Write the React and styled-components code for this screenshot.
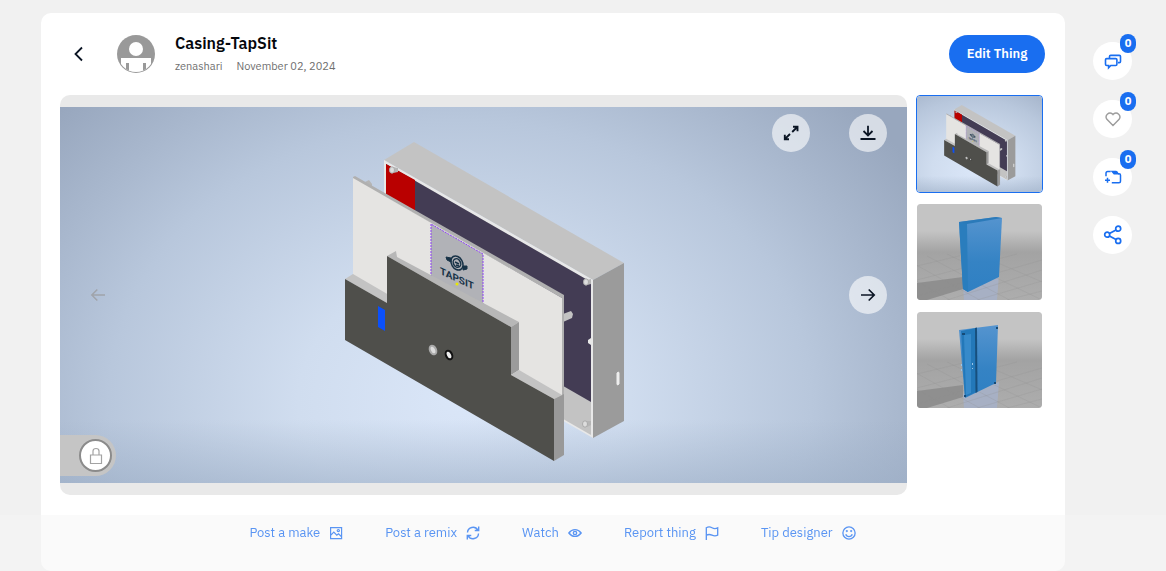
import React from "react";
import styled, { createGlobalStyle, css } from "styled-components";

const BLUE = "#196ef0";
const INK = "#0b1524";

const GlobalStyle = createGlobalStyle`
  * { box-sizing: border-box; }
  body {
    margin: 0;
    background: #f1f1f1;
    color: ${INK};
    font-family: "IBM Plex Sans", Roboto, "Liberation Sans", sans-serif;
  }
  button { font: inherit; color: inherit; border: 0; padding: 0; background: none; cursor: pointer; }
  a { color: inherit; text-decoration: none; }
  svg { display: block; }
`;

const Page = styled.div`
  display: flex;
  align-items: flex-start;
  padding: 13px 0 0 41px;
`;

const Card = styled.main`
  flex: 1;
  min-width: 0;
  padding: 22px 20px 76px 19px;
  background: #fff;
  border-radius: 10px;
`;

const Header = styled.header`
  display: flex;
  align-items: center;
  height: 38px;
  margin-bottom: 22px;
`;

const BackLink = styled.a`
  display: flex;
  width: 57px;
  padding-left: 11px;
`;

const Heading = styled.div`
  flex: 1;
  padding: 0 0 2px 20px;
`;

const Title = styled.h1`
  margin: 0;
  font-size: 16px;
  line-height: 20px;
  font-weight: 600;
  color: #05070c;
`;

const Meta = styled.div`
  display: flex;
  gap: 14px;
  padding-top: 6px;
  font-size: 11px;
  line-height: 14px;
  color: #6f6f6f;
`;

const EditButton = styled.button`
  height: 38px;
  width: 96px;
  border-radius: 19px;
  background: ${BLUE};
  color: #fff;
  font-size: 13px;
  font-weight: 600;
  padding-bottom: 2px;
`;

const Gallery = styled.section`
  display: flex;
  align-items: flex-start;
  gap: 9px;
`;

const Viewer = styled.div`
  position: relative;
  flex: 1;
  min-width: 0;
  padding: 12px 0;
  overflow: hidden;
  background: #e9e9e9;
  border-radius: 10px;
`;

const Render = styled.svg`
  width: 100%;
  height: auto;
  aspect-ratio: 847 / 376;
`;

const RoundButton = styled.button`
  display: grid;
  place-items: center;
  width: 38px;
  height: 38px;
  border-radius: 50%;
  background: ${(p) => (p.$bare ? "transparent" : "rgba(255, 255, 255, 0.6)")};
  color: ${(p) => (p.$bare ? "#a0a4ab" : INK)};
`;

const TopControls = styled.div`
  position: absolute;
  top: 19px;
  right: 20px;
  display: flex;
  gap: 39px;
`;

const SlideControl = styled.div`
  position: absolute;
  top: calc(50% - 19px);
  ${(p) => (p.$side === "left" ? css`left: 19px;` : css`right: 20px;`)}
`;

const LockTab = styled.div`
  position: absolute;
  left: 0;
  bottom: 19px;
  padding: 4px 4px 4px 19px;
  border-radius: 0 21px 21px 0;
  background: #c5c5c5;
`;

const LockButton = styled.button`
  display: grid;
  place-items: center;
  width: 33px;
  height: 33px;
  border: 2px solid #8b8b8b;
  border-radius: 50%;
  background: #fff;
`;

const Thumbs = styled.div`
  display: flex;
  flex-direction: column;
  gap: 10px;
  width: 127px;
  margin-right: 2px;
`;

const Thumb = styled.button`
  height: 98px;
  overflow: hidden;
  border: 1px solid ${(p) => (p.$active ? BLUE : "transparent")};
  border-radius: 4px;
  svg { width: 100%; height: 100%; border-radius: 3px; }
`;

const Rail = styled.aside`
  display: flex;
  flex-direction: column;
  gap: 20px;
  width: 101px;
  padding: 29px 0 0 28px;
`;

const RailButton = styled.button`
  position: relative;
  display: grid;
  place-items: center;
  width: 39px;
  height: 38px;
  border-radius: 50%;
  background: #fff;
  color: ${(p) => (p.$muted ? "#9c9c9c" : BLUE)};
`;

const Badge = styled.span`
  position: absolute;
  top: -8px;
  right: -4px;
  width: 16px;
  border-radius: 8px;
  background: ${BLUE};
  color: #fff;
  font-size: 11px;
  font-weight: 700;
  line-height: 19px;
  text-align: center;
`;

const ActionBar = styled.nav`
  position: fixed;
  inset: auto 0 0 0;
  display: flex;
  justify-content: center;
  gap: 42px;
  height: 56px;
  padding: 9px 102px 0 41px;
  background: rgba(245, 245, 245, 0.5);
`;

const Action = styled.button`
  display: flex;
  align-items: center;
  gap: 9px;
  height: 18px;
  font-size: 13px;
  line-height: 18px;
  color: #5a95f3;
`;

function Icon({ size = 16, box = 16, width = 1.5, children }) {
  return (
    <svg width={size} height={size} viewBox={`0 0 ${box} ${box}`} fill="none" stroke="currentColor" strokeWidth={width} aria-hidden="true">
      {children}
    </svg>
  );
}

const ChevronLeft = () => <Icon width={1.8}><path d="M11 1.500 4.500 8l6.500 6.500" /></Icon>;
const Expand = () => (
  <Icon width={1.9}>
    <path d="M10 1.800h4.500v4.400M14 2.300 9.200 7M1.800 9.800v4.400H6M2.300 13.700 7 9" />
  </Icon>
);
const Download = () => (
  <Icon width={1.8}><path d="M8 .8v9.500M3.500 6 8 10.500 12.500 6M.5 14h15" /></Icon>
);
const ArrowRight = () => <Icon width={1.7}><path d="M1 8h13M8.700 2.500 14.200 8l-5.500 5.500" /></Icon>;
const ArrowLeft = () => <Icon><path d="M15 8H2M7.300 2.500 1.800 8l5.500 5.500" /></Icon>;
const Chat = () => (
  <Icon size={18} box={18} width={1.6}>
    <path d="M5.500 6V4.600q0-1.200 1.200-1.200h8.600q1.200 0 1.200 1.200v4.800q0 1.200-1.200 1.200H14" />
    <path d="M2.700 6.600h9q1.200 0 1.200 1.200v4.500q0 1.200-1.200 1.200H6.800l-2.200 2.300v-2.300H2.700q-1.200 0-1.200-1.200V7.800q0-1.200 1.200-1.200Z" />
  </Icon>
);
const Heart = () => (
  <Icon width={1.400}><path d="M8 14.600 1.900 8.300A3.900 3.900 0 0 1 7.400 2.900L8 3.600l.6-.7a3.900 3.900 0 0 1 5.500 5.400Z" /></Icon>
);
const Collect = () => (
  <Icon size={18} box={18} width={1.5}>
    <path d="M2 8.300V5.200q0-1.700 1.700-1.700h3M14 5.700h1q1.500 0 1.500 1.500v6q0 1.500-1.500 1.500H7.800M1 12.300h5M3.500 9.800v5" />
    <path d="M6.500 2.800h5.500q1.500 0 2 1.500l1 2.200H9.800Z" fill="currentColor" stroke="none" />
  </Icon>
);
const Share = () => (
  <Icon size={20} box={20} width={1.7}>
    <circle cx="4.200" cy="9.700" r="2.500" /><circle cx="15.200" cy="3.700" r="2.500" /><circle cx="15.200" cy="15.900" r="2.500" />
    <path d="m6.400 8.500 6.600-3.600M6.400 10.900l6.600 3.700" />
  </Icon>
);
const Picture = () => (
  <Icon size={14} box={14} width={1.2}>
    <path d="M1.600 1.600h11v11h-11ZM1.600 9.300 4.800 6l3 3.200 1.700-1.500 3.100 3" /><circle cx="9.300" cy="4.600" r="1.100" />
  </Icon>
);
const Renew = () => (
  <Icon size={14} width={1.6}>
    <path d="M1.700 7.500A6.300 6.300 0 0 1 13.500 4.800M14.500.5v4.600H10M14.300 8.500A6.300 6.300 0 0 1 2.500 11.200M1.500 15.500v-4.600H6" />
  </Icon>
);
const Eye = () => (
  <Icon size={14} width={1.600}>
    <path d="M1 8q2.800-3.900 7-3.900T15 8q-2.800 3.900-7 3.900T1 8Z" /><circle cx="8" cy="8" r="1.900" />
  </Icon>
);
const Flag = () => (
  <Icon size={14} width={1.5}><path d="M1.500 16V2q3.200-1.800 6.500 0t6.500 0v8.500q-3.200 1.600-6.500 0T1.500 10.500" /></Icon>
);
const Smile = () => (
  <Icon size={14} width={1.500}>
    <circle cx="8" cy="8" r="7" /><path d="M4.300 9.500a3.900 3.900 0 0 0 7.400 0" />
    <circle cx="5.500" cy="5.800" r=".5" /><circle cx="10.500" cy="5.800" r=".5" />
  </Icon>
);

function Lock() {
  return (
    <svg width="14" height="18" viewBox="0 0 14 18" fill="none" stroke="#a3a3a3" strokeWidth="1.200" aria-hidden="true">
      <path d="M1.500 8h11v8.500h-11ZM4 8V4q0-2.500 3-2.500T10 4v4" />
    </svg>
  );
}

function Avatar() {
  return (
    <svg width="38" height="38" viewBox="0 0 38 38" role="img" aria-label="zenashari">
      <clipPath id="face"><circle cx="19" cy="19" r="18" /></clipPath>
      <circle cx="19" cy="19" r="19" fill="#999" />
      <g clipPath="url(#face)">
        <circle cx="19" cy="14" r="7" fill="#fff" />
        <path d="M4 23h30v14H4Z" fill="#fff" />
        <path d="M9 28h3v9H9ZM26 28h3v9h-3Z" fill="#999" />
      </g>
    </svg>
  );
}

function CasingRender({ id, label }) {
  return (
    <Render viewBox="60 107 847 376" preserveAspectRatio="xMidYMid slice" role="img" aria-label={label}>
      <defs>
        <radialGradient id={`${id}-sky`} gradientUnits="userSpaceOnUse" cx="0" cy="0" r="1" gradientTransform="translate(460 400) scale(540 430)">
          <stop offset="0" stopColor="#dae6f8" />
          <stop offset=".3" stopColor="#d0ddef" />
          <stop offset=".65" stopColor="#b8c7dc" />
          <stop offset="1" stopColor="#98a7be" />
        </radialGradient>
        <linearGradient id={`${id}-floor`} x1="0" y1="0" x2="0" y2="1">
          <stop offset="0" stopColor="#9badc5" stopOpacity="0" />
          <stop offset="1" stopColor="#9badc5" stopOpacity=".55" />
        </linearGradient>
      </defs>
      <path d="M60 107h847v376H60Z" fill={`url(#${id}-sky)`} />
      <path d="M60 420h847v63H60Z" fill={`url(#${id}-floor)`} />

      <path d="M384 160 414 142 624 263 593 280Z" fill="#c3c3c3" />
      <path d="M593 280 624 263V421L593 438Z" fill="#9b9b9b" />
      <path d="M384 160 593 280V438L384 318Z" fill="#e8e8e8" />
      <path d="M386 164 591 282V435L386 317Z" fill="#c3c3c3" />
      <path d="M386 164 591 282V402L386 284Z" fill="#433c54" />
      <path d="M386 164 415 180V211L386 195Z" fill="#b90000" />
      <path d="M617 373q2-2 2 0v11q-2 2-2 0Z" fill="#eee" stroke="#eee" />
      <g fill="#ddd" stroke="#aaa">
        <path d="m393 173 5-1v-4l-5-1ZM587 285l4-1v-5l-4 1ZM587 427l4-2v-4l-4 0Z" fill="#b5b5b5" stroke="none" />
        <ellipse cx="392" cy="170" rx="2.500" ry="3.200" /><ellipse cx="586" cy="282" rx="2.500" ry="3.200" /><ellipse cx="585" cy="424" rx="2.500" ry="3.200" />
      </g>
      <path d="M588 340 591 338V345L588 343Z" fill="#e8e8e8" />
      <path d="m563 314 8-3 2 3-1 4-9 4Z" fill="#c3c3c3" />
      <path d="m365 182 4-2 3 4v4Z" fill="#b5b5b5" />

      <path d="M353 177 355 176 564 295V420L562 420V298L353 179Z" fill="#b0b0b0" />
      <path d="M353 178 562 298V410L353 290Z" fill="#e5e4e2" />
      <path d="M431 224 483 254V310L431 280Z" fill="#b1b2b7" />
      <path d="M431 280V224L483 254V310" fill="none" stroke="#8b3ff5" strokeDasharray="2 1" />
      <g transform="translate(457 263)" fill="none" stroke="#173247" strokeWidth="1.500">
        <ellipse rx="5.500" ry="7.500" transform="rotate(-30)" />
        <ellipse rx="3.500" ry="4.500" transform="rotate(-30)" />
        <path d="M-2-1 2 1M-1 2 2 3" />
        <path d="m-11-6 5 1v4l-4-2ZM10 3 6 3v4l4-1Z" fill="#173247" strokeWidth="1" />
      </g>
      <text transform="translate(440 274) skewY(25)" fontFamily="Roboto, sans-serif" fontSize="10" fontWeight="700" fill="#173247">TAPSIT</text>
      <circle cx="457" cy="284" r="1.500" fill="#e9e900" />

      <path d="M345 279 353 274 389 295 387 303Z" fill="#c3c3c3" />
      <path d="M387 256 396 251 397 257 519 322 511 327Z" fill="#b7b7b7" />
      <path d="M511 327 519 322V370L511 375Z" fill="#9b9b9b" />
      <path d="M511 375 519 370 562 395 554 399Z" fill="#c3c3c3" />
      <path d="M554 399 564 394V455L554 461Z" fill="#999" />
      <path d="M345 279 387 303V256L511 327V375L554 399V461L345 340Z" fill="#4f4f4b" />
      <path d="M378 306 385 310V331L378 327Z" fill="#0b50fb" />
      <ellipse cx="433" cy="350" rx="3" ry="4.500" fill="#ddd" stroke="#aaa" strokeWidth="2" transform="rotate(-25 433 350)" />
      <ellipse cx="449" cy="355" rx="3" ry="4.500" fill="#eee" stroke="#111" strokeWidth="2" transform="rotate(-25 449 355)" />
    </Render>
  );
}

function PrintBed({ id, label, children }) {
  return (
    <svg viewBox="0 0 125 96" preserveAspectRatio="xMidYMid slice" role="img" aria-label={label}>
      <defs>
        <linearGradient id={`${id}-bed`} x1="0" y1="0" x2="0" y2="1">
          <stop offset=".28" stopColor="#c4c4c4" /><stop offset=".5" stopColor="#a3a3a3" /><stop offset="1" stopColor="#adadad" />
        </linearGradient>
        <linearGradient id={`${id}-blue`} x1="0" y1="0" x2="0" y2="1">
          <stop offset="0" stopColor="#5594cf" /><stop offset=".6" stopColor="#3583c4" /><stop offset="1" stopColor="#2f80c3" />
        </linearGradient>
      </defs>
      <path d="M0 0h125v96H0Z" fill={`url(#${id}-bed)`} />
      <path d="M0 79 46 73V85L10 96H0Z" fill="#8f8f8f" />
      <path d="M46 82 82 70 80 96H47Z" fill="#a7b0c4" />
      <path d="M-20 66 40 100M-10 56 70 100M10 52 100 100M30 50 125 96M60 50 130 80M0 62 50 50M0 76 100 50M0 92 125 56M30 96 125 66M60 96 125 77M90 96 125 87" fill="none" stroke="#8d8d8d" strokeWidth=".5" opacity=".45" />
      {children}
    </svg>
  );
}

function BoxFront() {
  return (
    <PrintBed id="front" label="Casing, closed side">
      <path d="M42 18 79 13 85 14 82 73 51 88 46 85Z" fill="url(#front-blue)" />
      <path d="M42 18 50 19 51 88 46 85Z" fill="#2a7dbd" />
      <path d="M42 18 79 13 85 14 50 20Z" fill="#2b7ab9" />
    </PrintBed>
  );
}

function BoxBack() {
  return (
    <PrintBed id="back" label="Casing, open side">
      <path d="M42 18 81 13 79 71 48 86Z" fill="url(#back-blue)" />
      <path d="M44 19 59 16V80L48 85Z" fill="#2378b9" />
      <path d="M47 23 54 22V81L49 83Z" fill="#378aca" />
      <path d="M58 16 60 15.500 60.500 80 58.500 81Z" fill="#174f7d" />
      <path d="M45 21h3v2h-3ZM79 15h2v2h-2ZM47 83h2v2h-2ZM77 70h2v2h-2Z" fill="#164a76" />
      <path d="M44 52h1v2h-1ZM44 57h1v2h-1ZM55 51h1v2h-1ZM55 56h1v1h-1Z" fill="#9cc5e6" />
    </PrintBed>
  );
}

const actions = [
  ["Post a make", Picture],
  ["Post a remix", Renew],
  ["Watch", Eye],
  ["Report thing", Flag],
  ["Tip designer", Smile],
];

const railItems = [
  { label: "Comments", icon: Chat, count: 0 },
  { label: "Like", icon: Heart, count: 0, muted: true },
  { label: "Collect", icon: Collect, count: 0 },
  { label: "Share", icon: Share },
];

export default function App() {
  return (
    <>
      <GlobalStyle />
      <Page>
        <Card>
          <Header>
            <BackLink href="#" aria-label="Back"><ChevronLeft /></BackLink>
            <Avatar />
            <Heading>
              <Title>Casing-TapSit</Title>
              <Meta><a href="#">zenashari</a><span>November 02, 2024</span></Meta>
            </Heading>
            <EditButton>Edit Thing</EditButton>
          </Header>
          <Gallery>
            <Viewer>
              <CasingRender id="main" label="Exploded view of the casing" />
              <TopControls>
                <RoundButton aria-label="Full screen"><Expand /></RoundButton>
                <RoundButton aria-label="Download"><Download /></RoundButton>
              </TopControls>
              <SlideControl $side="left"><RoundButton $bare disabled aria-label="Previous"><ArrowLeft /></RoundButton></SlideControl>
              <SlideControl $side="right"><RoundButton aria-label="Next"><ArrowRight /></RoundButton></SlideControl>
              <LockTab><LockButton aria-label="Lock"><Lock /></LockButton></LockTab>
            </Viewer>
            <Thumbs>
              <Thumb $active aria-label="Image 1"><CasingRender id="small" label="Exploded view" /></Thumb>
              <Thumb aria-label="Image 2"><BoxFront /></Thumb>
              <Thumb aria-label="Image 3"><BoxBack /></Thumb>
            </Thumbs>
          </Gallery>
        </Card>
        <Rail>
          {railItems.map(({ label, icon: Glyph, count, muted }) => (
            <RailButton key={label} $muted={muted} aria-label={label}>
              <Glyph />
              {count !== undefined && <Badge>{count}</Badge>}
            </RailButton>
          ))}
        </Rail>
      </Page>
      <ActionBar>
        {actions.map(([label, Glyph]) => (
          <Action key={label}>{label}<Glyph /></Action>
        ))}
      </ActionBar>
    </>
  );
}
